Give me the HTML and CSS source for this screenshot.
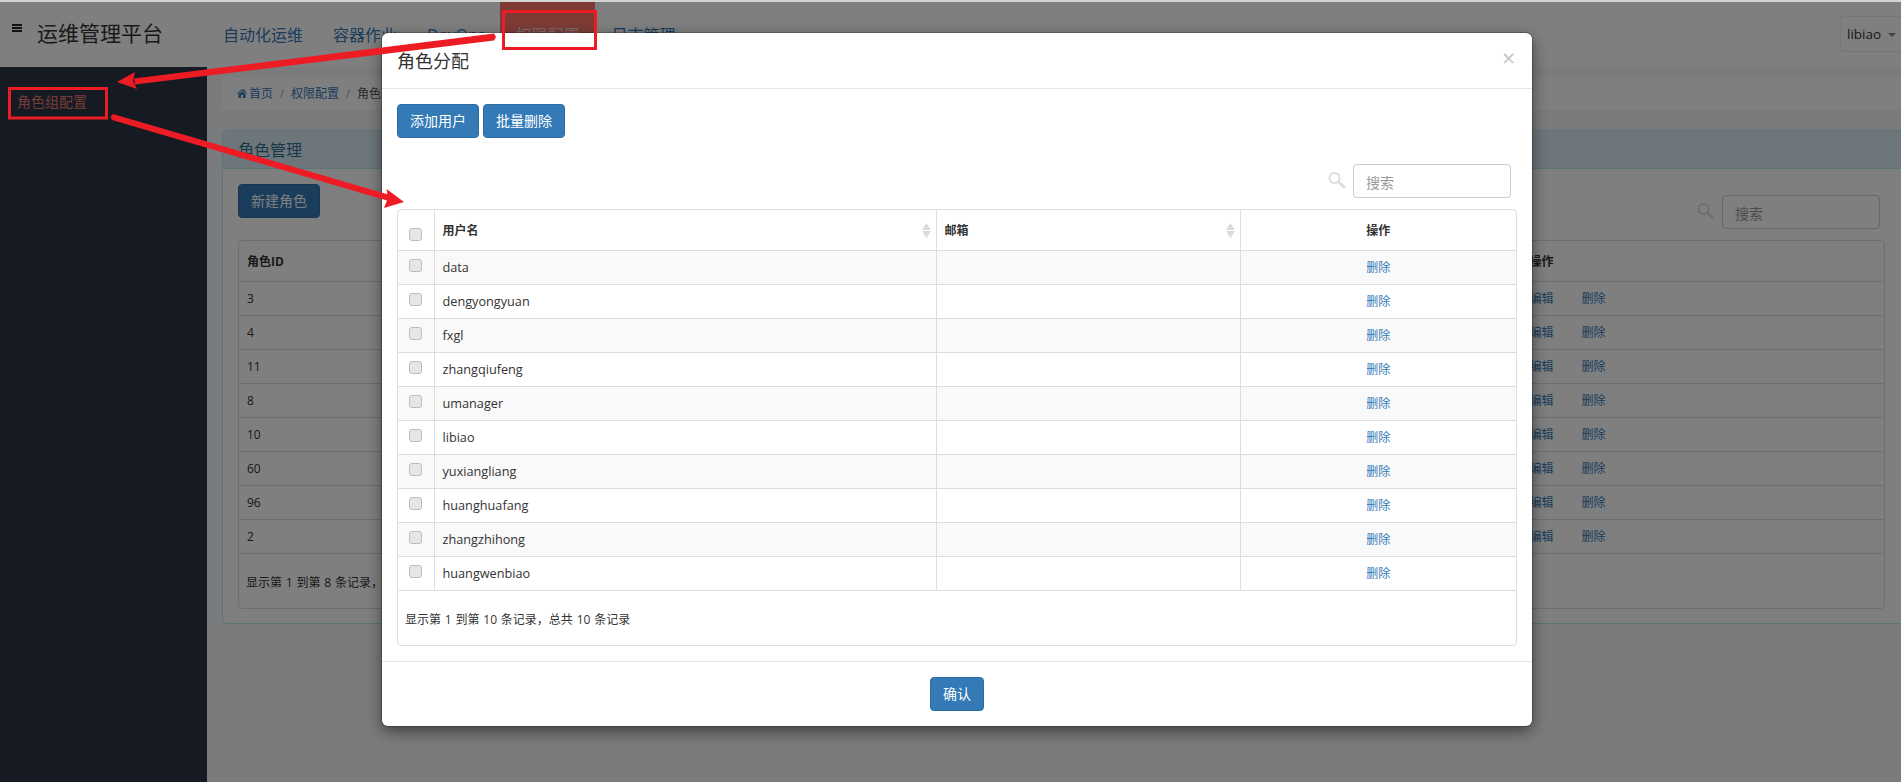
FILE: index.html
```html
<!DOCTYPE html>
<html lang="zh-CN">
<head>
<meta charset="utf-8">
<title>运维管理平台</title>
<link rel="stylesheet" href="styles.css">
</head>
<body>
<div class="app">
  <div class="topline"></div>
  <header class="navbar">
    <svg class="burger" width="10" height="8" viewBox="0 0 10 8"><path d="M0 0h10v2H0zM0 3h10v2H0zM0 6h10v2H0z" fill="#222"/></svg>
    <div class="brand">运维管理平台</div>
    <nav class="nav">
      <a class="nav-item">自动化运维</a>
      <a class="nav-item">容器作业</a>
      <a class="nav-item">DevOps</a>
      <a class="nav-item active">权限配置</a>
      <a class="nav-item">日志管理</a>
    </nav>
    <div class="user">libiao<span class="caret"></span></div>
  </header>
  <div class="below">
    <aside class="sidebar"><a class="side-link">角色组配置</a></aside>
    <main class="main">
      <div class="breadcrumb">
        <svg class="home" width="10" height="9" viewBox="0 0 10 9"><path d="M5 0 0 4.500l.6.7L5 1.300l4.400 3.900.6-.7L8 2.700V.6H6.800v1L5 0zM1.500 5.300V9h2.500V6h2v3h2.500V5.300L5 2.200z" fill="#337ab7"/></svg>
        <a>首页</a><span class="sep">/</span><a>权限配置</a><span class="sep">/</span><span class="crumb-cur">角色管理</span>
      </div>
      <section class="panel">
        <div class="panel-heading">角色管理</div>
        <div class="panel-body">
          <div class="toolbar">
            <button class="btn">新建角色</button>
            <div class="search search-main">
              <svg class="mag" width="18" height="16" viewBox="0 0 18 16"><circle cx="6.500" cy="6" r="5" fill="none" stroke="currentColor" stroke-width="2"/><path d="M10.500 10l5.500 5" stroke="currentColor" stroke-width="3" stroke-linecap="round"/></svg>
              <input class="search-input" placeholder="搜索">
            </div>
          </div>
          <div class="table-box">
            <table class="grid role-grid">
              <colgroup><col class="c-rid"><col class="c-rname"><col class="c-rop"></colgroup>
              <thead><tr><th>角色ID</th><th>角色名称</th><th>操作</th></tr></thead>
              <tbody>
                <tr><td>3</td><td></td><td><a class="lnk">编辑</a><a class="lnk">删除</a></td></tr>
                <tr><td>4</td><td></td><td><a class="lnk">编辑</a><a class="lnk">删除</a></td></tr>
                <tr><td>11</td><td></td><td><a class="lnk">编辑</a><a class="lnk">删除</a></td></tr>
                <tr><td>8</td><td></td><td><a class="lnk">编辑</a><a class="lnk">删除</a></td></tr>
                <tr><td>10</td><td></td><td><a class="lnk">编辑</a><a class="lnk">删除</a></td></tr>
                <tr><td>60</td><td></td><td><a class="lnk">编辑</a><a class="lnk">删除</a></td></tr>
                <tr><td>96</td><td></td><td><a class="lnk">编辑</a><a class="lnk">删除</a></td></tr>
                <tr><td>2</td><td></td><td><a class="lnk">编辑</a><a class="lnk">删除</a></td></tr>
              </tbody>
            </table>
            <div class="table-foot">显示第 1 到第 8 条记录，总共 8 条记录</div>
          </div>
        </div>
      </section>
    </main>
  </div>
</div>

<div class="backdrop"></div>

<div class="modal">
  <div class="modal-header">
    <h4 class="modal-title">角色分配</h4>
    <span class="close">×</span>
  </div>
  <div class="modal-body">
    <div class="modal-actions">
      <button class="btn">添加用户</button>
      <button class="btn">批量删除</button>
    </div>
    <div class="search search-modal">
      <svg class="mag" width="18" height="16" viewBox="0 0 18 16"><circle cx="6.500" cy="6" r="5" fill="none" stroke="currentColor" stroke-width="2"/><path d="M10.500 10l5.500 5" stroke="currentColor" stroke-width="3" stroke-linecap="round"/></svg>
      <input class="search-input" placeholder="搜索">
    </div>
    <div class="table-box">
      <table class="grid user-grid">
        <colgroup><col class="c-cb"><col class="c-user"><col class="c-mail"><col class="c-op"></colgroup>
        <thead>
          <tr>
            <th class="cb-cell"><input type="checkbox" class="cb"></th>
            <th><div class="th-in">用户名<svg class="sort" width="9" height="15" viewBox="0 0 9 15"><path d="M4.500 0 9 7H0zM0 8h9l-4.500 7z" fill="#dcdcdc"/></svg></div></th>
            <th><div class="th-in">邮箱<svg class="sort" width="9" height="15" viewBox="0 0 9 15"><path d="M4.500 0 9 7H0zM0 8h9l-4.500 7z" fill="#dcdcdc"/></svg></div></th>
            <th class="center"><div class="th-center">操作</div></th>
          </tr>
        </thead>
        <tbody>
          <tr><td class="cb-cell"><input type="checkbox" class="cb"></td><td>data</td><td></td><td class="center"><a class="lnk-plain">删除</a></td></tr>
          <tr><td class="cb-cell"><input type="checkbox" class="cb"></td><td>dengyongyuan</td><td></td><td class="center"><a class="lnk-plain">删除</a></td></tr>
          <tr><td class="cb-cell"><input type="checkbox" class="cb"></td><td>fxgl</td><td></td><td class="center"><a class="lnk-plain">删除</a></td></tr>
          <tr><td class="cb-cell"><input type="checkbox" class="cb"></td><td>zhangqiufeng</td><td></td><td class="center"><a class="lnk-plain">删除</a></td></tr>
          <tr><td class="cb-cell"><input type="checkbox" class="cb"></td><td>umanager</td><td></td><td class="center"><a class="lnk-plain">删除</a></td></tr>
          <tr><td class="cb-cell"><input type="checkbox" class="cb"></td><td>libiao</td><td></td><td class="center"><a class="lnk-plain">删除</a></td></tr>
          <tr><td class="cb-cell"><input type="checkbox" class="cb"></td><td>yuxiangliang</td><td></td><td class="center"><a class="lnk-plain">删除</a></td></tr>
          <tr><td class="cb-cell"><input type="checkbox" class="cb"></td><td>huanghuafang</td><td></td><td class="center"><a class="lnk-plain">删除</a></td></tr>
          <tr><td class="cb-cell"><input type="checkbox" class="cb"></td><td>zhangzhihong</td><td></td><td class="center"><a class="lnk-plain">删除</a></td></tr>
          <tr><td class="cb-cell"><input type="checkbox" class="cb"></td><td>huangwenbiao</td><td></td><td class="center"><a class="lnk-plain">删除</a></td></tr>
        </tbody>
      </table>
      <div class="table-foot">显示第 1 到第 10 条记录，总共 10 条记录</div>
    </div>
  </div>
  <div class="modal-footer"><button class="btn">确认</button></div>
</div>

<svg class="annot" width="1901" height="782" viewBox="0 0 1901 782">
  <g fill="none" stroke="#ed1c24" stroke-width="3">
    <rect x="503.500" y="11.500" width="92" height="37"/>
    <rect x="9.500" y="88.500" width="97" height="29.500"/>
  </g>
  <path d="M494 33.500 496 37 494 40.500 135 84.500 134 78.500z" fill="#ed1c24"/>
  <path d="M117 82 135 72 133 81 137 89z" fill="#ed1c24"/>
  <path d="M113 114 390 195 388.500 201 112 120 110.500 117z" fill="#ed1c24"/>
  <path d="M404 202 384 208 388 198 386.500 189z" fill="#ed1c24"/>
</svg>
</body>
</html>
```
FILE: styles.css
```css
* { box-sizing: border-box; }
html, body { margin: 0; height: 782px; overflow: hidden; }
body {
  width: 1901px;
  position: relative;
  font-family: "Open Sans", "Noto Sans CJK SC", sans-serif;
  font-size: 12px;
  color: #333;
  background: #f5f6fa;
}
a { color: #337ab7; text-decoration: none; }

.app { display: flex; flex-direction: column; height: 782px; }
.topline { height: 2px; background: #d4d4d4; position: relative; z-index: 20; }

.navbar { height: 65px; flex: none; background: #fff; display: flex; align-items: flex-start; }
.burger { margin: 22px 0 0 12px; flex: none; }
.brand { margin: 15px 0 0 15px; width: 171px; font-size: 21px; line-height: 32px; color: #333; flex: none; }
.nav { display: flex; height: 65px; }
.nav-item { font-size: 16px; line-height: 22px; padding: 22px 15px 0; color: #337ab7; }
.nav-item.active { background: #fa766c; color: #f4d0cc; margin-right: 2px; }
.user {
  margin: 14px 0 0 auto;
  width: 61px;
  height: 36px;
  border: 1px solid #ededed;
  border-right: 0;
  border-radius: 4px 0 0 4px;
  padding: 7px 0 0 6px;
  font-size: 13.500px;
  line-height: 20px;
  color: #333;
  white-space: nowrap;
}
.caret {
  display: inline-block;
  margin-left: 7px;
  vertical-align: middle;
  border-top: 4px solid #888;
  border-left: 4px solid transparent;
  border-right: 4px solid transparent;
}

.below { flex: 1; display: flex; min-height: 0; }
.sidebar { width: 207px; flex: none; background: #2a3446; padding: 25px 0 0 17px; }
.side-link { display: block; font-size: 14px; line-height: 20px; color: #e87a70; }

.main { flex: 1; padding: 10px 0 0 15px; min-width: 0; }
.breadcrumb {
  height: 33px;
  background: #fff;
  border-radius: 4px;
  padding: 0 0 0 15px;
  display: flex;
  align-items: center;
  line-height: 16px;
}
.home { margin-right: 2px; }
.sep { color: #aaa; width: 18px; text-align: center; }
.crumb-cur { color: #555; }

.panel {
  margin-top: 20px;
  height: 494px;
  background: #fff;
  border: 1px solid #bce8f1;
  border-right: 0;
  border-radius: 4px 0 0 4px;
}
.panel-heading {
  height: 38px;
  background: #d9edf7;
  border-bottom: 1px solid #bce8f1;
  padding: 0 0 0 15px;
  font-size: 16px;
  line-height: 39px;
  color: #31708f;
}
.panel-body { padding: 15px 16px 0 15px; }

.toolbar { height: 45px; display: flex; justify-content: space-between; align-items: flex-end; margin-bottom: 11px; }
.toolbar .btn { align-self: flex-start; }

.btn {
  height: 34px;
  padding: 0 12px;
  border: 1px solid #2e6da4;
  border-radius: 4px;
  background: #337ab7;
  color: #fff;
  font: inherit;
  font-size: 14px;
  line-height: 32px;
}

.search { display: flex; align-items: center; justify-content: flex-end; gap: 7px; }
.search-main { margin-right: 5px; }
.search-modal { margin: 26px 6px 11px 0; }
.mag { color: #ddd; margin-top: -2px; }
.search-input {
  width: 158px;
  height: 34px;
  padding: 2px 12px 0;
  border: 1px solid #ccc;
  border-radius: 4px;
  background: #fff;
  font: inherit;
  font-size: 14px;
  outline: 0;
}
.search-input::placeholder { color: #999; }

.table-box { border: 1px solid #ddd; border-radius: 4px; overflow: hidden; }
.grid { width: 100%; border-collapse: collapse; table-layout: fixed; }
.grid th { height: 40px; border-bottom: 1px solid #ddd; border-right: 1px solid #ddd; font-weight: bold; text-align: left; padding: 0 8px; color: #333; }
.grid td { height: 34px; border-bottom: 1px solid #ddd; border-right: 1px solid #ddd; padding: 0 8px; color: #333; white-space: nowrap; }
.grid th:last-child, .grid td:last-child { border-right: 0; }

.role-grid .c-rid { width: 142px; }
.role-grid .c-rop { width: 363px; }
.lnk { color: #337ab7; margin-right: 28px; }

.user-grid tbody tr:nth-child(odd) { background: #f9f9f9; }
.user-grid .c-cb { width: 36px; }
.user-grid .c-user { width: 502px; }
.user-grid .c-mail { width: 304px; }
.user-grid th { vertical-align: top; padding-top: 12px; }
.user-grid th.cb-cell { padding-top: 0; vertical-align: middle; }
.user-grid td { font-size: 12.700px; }
.user-grid td.cb-cell { vertical-align: middle; }
.cb-cell { text-align: center; }
.grid .cb-cell { padding-left: 0; padding-right: 0; }
.cb {
  appearance: none;
  display: block;
  width: 13px;
  height: 13px;
  margin: 0 auto 3px;
  background: #e6e6e6;
  border: 1px solid #bdbdbd;
  border-radius: 3px;
}
.user-grid th .cb { margin: 10px auto 0; }
.th-in { display: flex; justify-content: space-between; align-items: center; line-height: 17px; height: 17px; margin-right: -3px; }
.th-center { line-height: 17px; }
.center { text-align: center !important; }
.lnk-plain { color: #337ab7; font-size: 12px; }

.table-foot { padding: 20px 7px 0; height: 54px; line-height: 17px; color: #333; word-spacing: .7px; }

.backdrop { position: absolute; inset: 0; background: rgba(0, 0, 0, .5); z-index: 10; }

.modal {
  position: absolute;
  left: 382px;
  top: 33px;
  width: 1150px;
  height: 693px;
  background: #fff;
  border-radius: 6px;
  box-shadow: 0 5px 15px rgba(0, 0, 0, .5), 0 0 0 1px rgba(0, 0, 0, .2);
  z-index: 11;
  display: flex;
  flex-direction: column;
}
.modal-header {
  height: 56px;
  flex: none;
  border-bottom: 1px solid #e5e5e5;
  padding: 0 15px;
  display: flex;
  justify-content: space-between;
  align-items: center;
}
.modal-title { margin: 0; font-size: 18px; font-weight: normal; line-height: 26px; }
.close { font-family: "DejaVu Sans", sans-serif; font-size: 18px; font-weight: normal; color: #c4c4c4; line-height: 1; margin-right: 1px; margin-top: -5px; }
.modal-body { padding: 15px; flex: none; }
.modal-actions { display: flex; gap: 4px; height: 34px; }
.modal-footer {
  flex: 1;
  border-top: 1px solid #e5e5e5;
  padding: 15px 0;
  display: flex;
  justify-content: center;
  align-items: flex-start;
}

.annot { position: absolute; left: 0; top: 0; z-index: 20; pointer-events: none; }
```
